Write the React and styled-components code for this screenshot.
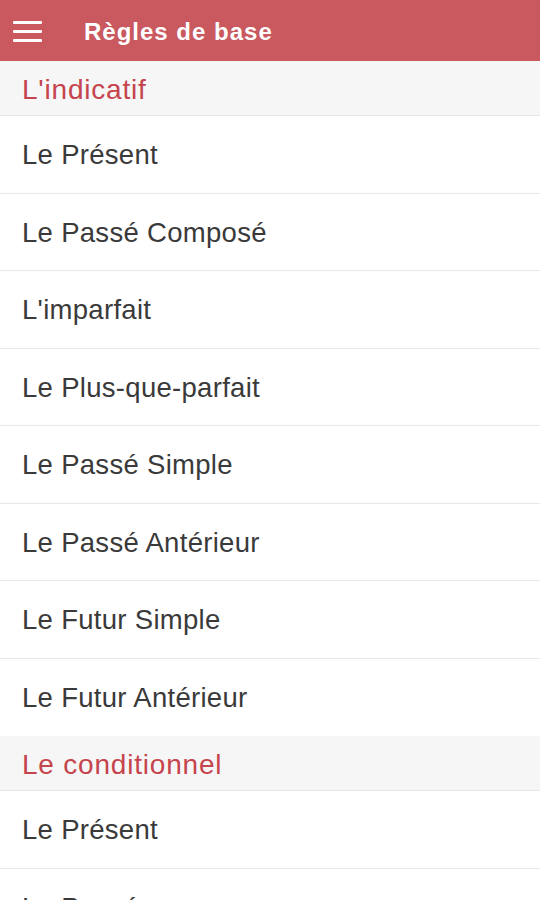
import styled, { createGlobalStyle } from "styled-components";

const GlobalStyle = createGlobalStyle`
  html, body {
    margin: 0;
    padding: 0;
    background: #ffffff;
  }
  body {
    font-family: "Liberation Sans", Arial, Helvetica, sans-serif;
    -webkit-font-smoothing: antialiased;
  }
`;

const Screen = styled.div`
  width: 540px;
  height: 900px;
  overflow: hidden;
  display: flex;
  flex-direction: column;
  background: #ffffff;
`;

const Toolbar = styled.header`
  flex: 0 0 61px;
  display: flex;
  align-items: center;
  background: #c9585f;
  color: #ffffff;
  padding-left: 13px;
`;

const MenuButton = styled.button`
  width: 29px;
  height: 21px;
  margin-top: 1px;
  padding: 0;
  border: none;
  background: transparent;
  display: flex;
  flex-direction: column;
  justify-content: space-between;
  cursor: pointer;
`;

const MenuBar = styled.span`
  display: block;
  height: 3px;
  width: 100%;
  background: #ffffff;
  border-radius: 1px;
`;

const Title = styled.h1`
  margin: 2px 0 0 42px;
  font-size: 24px;
  font-weight: 700;
  letter-spacing: 1px;
`;

const List = styled.div`
  flex: 1;
  display: flex;
  flex-direction: column;
`;

const SectionHeader = styled.div`
  flex: 0 0 55px;
  box-sizing: border-box;
  display: flex;
  align-items: center;
  padding: 3px 22px 0;
  background: #f6f6f6;
  border-bottom: 1px solid #e6e6e6;
  color: #c5444d;
  font-size: 28px;
  letter-spacing: 0.8px;
`;

const Row = styled.div`
  flex: 0 0 77.5px;
  box-sizing: border-box;
  display: flex;
  align-items: center;
  padding: 2px 22px 0;
  border-bottom: ${({ $last }) => ($last ? "none" : "1.5px solid #e8e8e8")};
  color: #3a3a3a;
  font-size: 27.5px;
  letter-spacing: 0.3px;
  white-space: nowrap;
`;

const sections = [
  {
    title: "L'indicatif",
    items: [
      "Le Présent",
      "Le Passé Composé",
      "L'imparfait",
      "Le Plus-que-parfait",
      "Le Passé Simple",
      "Le Passé Antérieur",
      "Le Futur Simple",
      "Le Futur Antérieur",
    ],
  },
  {
    title: "Le conditionnel",
    items: ["Le Présent", "Le Passé"],
  },
];

const App = () => {
  return (
    <>
      <GlobalStyle />
      <Screen>
        <Toolbar>
          <MenuButton aria-label="menu">
            <MenuBar />
            <MenuBar />
            <MenuBar />
          </MenuButton>
          <Title>Règles de base</Title>
        </Toolbar>
        <List>
          {sections.map((section) => (
            <div key={section.title} style={{ display: "contents" }}>
              <SectionHeader>{section.title}</SectionHeader>
              {section.items.map((item, i) => (
                <Row key={item + i} $last={i === section.items.length - 1}>
                  {item}
                </Row>
              ))}
            </div>
          ))}
        </List>
      </Screen>
    </>
  );
};

export default App;
